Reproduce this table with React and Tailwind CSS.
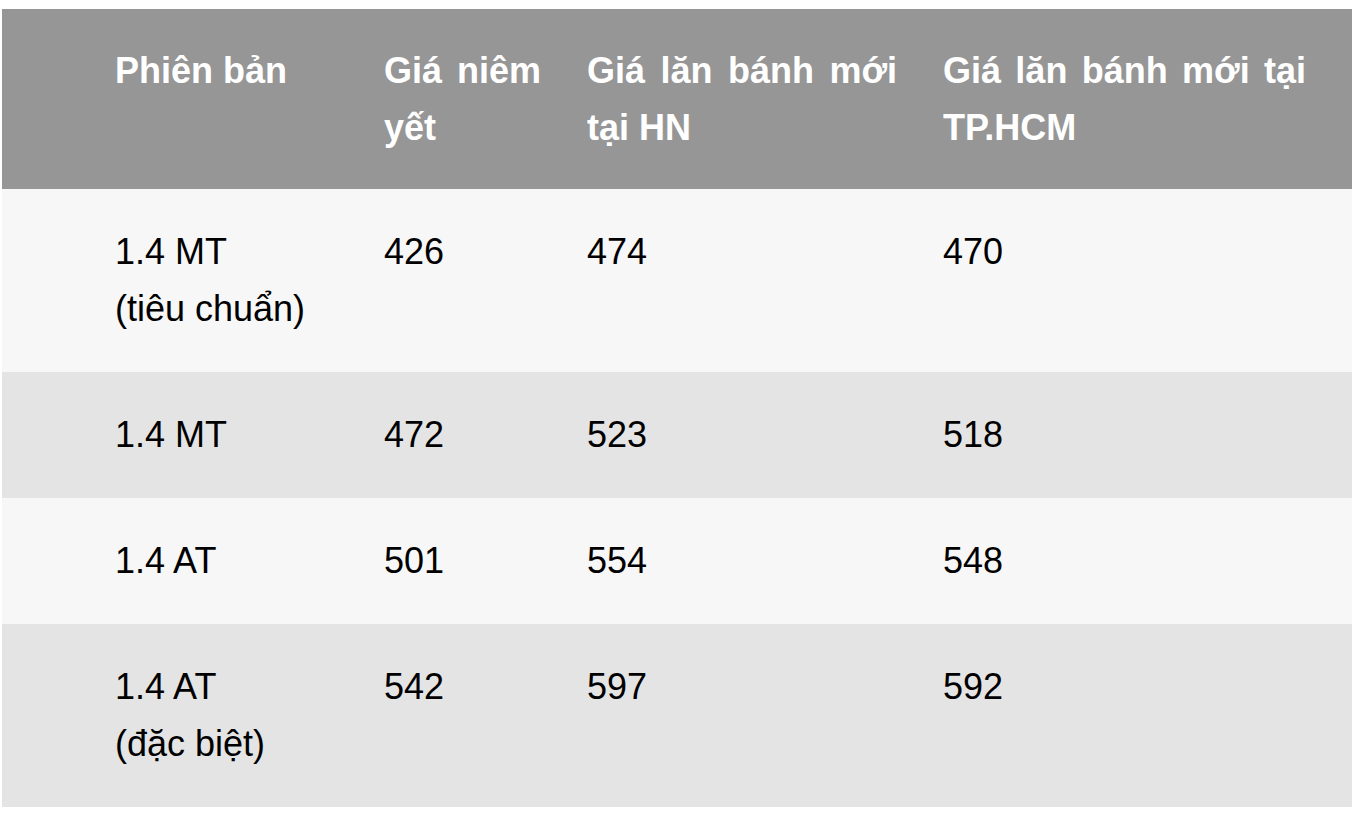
import React from 'react';

const rows = [
  { name: ['1.4 MT', '(tiêu chuẩn)'], list: '426', hn: '474', hcm: '470' },
  { name: ['1.4 MT'], list: '472', hn: '523', hcm: '518' },
  { name: ['1.4 AT'], list: '501', hn: '554', hcm: '548' },
  { name: ['1.4 AT', '(đặc biệt)'], list: '542', hn: '597', hcm: '592' },
];

// fixed column template shared by header and body rows
const cols = 'grid grid-cols-[359px_203px_356px_432px]';

const App = () => {
  return (
    <div
      className="min-h-screen bg-white pt-[9px] pl-[2px]"
      style={{ fontFamily: '"Liberation Sans", Arial, sans-serif' }}
    >
      <div className="w-[1350px] text-[36px] leading-[57px]">
        {/* Header */}
        <div className={`${cols} bg-[#969696] font-bold text-white`}>
          <div className="py-[33px] pl-[113px] pr-[23px] text-justify">Phiên bản</div>
          <div className="py-[33px] px-[23px] text-justify">Giá niêm yết</div>
          <div className="py-[33px] px-[23px] text-justify">Giá lăn bánh mới tại HN</div>
          <div className="py-[33px] pl-[23px] pr-[46px] text-justify">Giá lăn bánh mới tại TP.HCM</div>
        </div>

        {/* Body */}
        {rows.map((row, index) => (
          <div
            key={index}
            className={`${cols} text-black ${index % 2 === 0 ? 'bg-[#f7f7f7]' : 'bg-[#e4e4e4]'}`}
          >
            <div className="pt-[34px] pb-[35px] pl-[113px] pr-[23px]">
              {row.name.map((line, i) => (
                <div key={i}>{line}</div>
              ))}
            </div>
            <div className="pt-[34px] pb-[35px] px-[23px]">{row.list}</div>
            <div className="pt-[34px] pb-[35px] px-[23px]">{row.hn}</div>
            <div className="pt-[34px] pb-[35px] pl-[23px] pr-[46px]">{row.hcm}</div>
          </div>
        ))}
      </div>
    </div>
  );
};

export default App;
